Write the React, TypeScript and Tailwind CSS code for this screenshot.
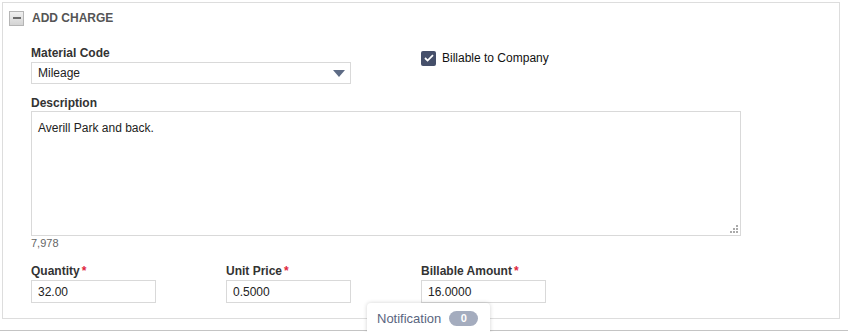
import React from "react";

const font = { fontFamily: '"Liberation Sans", Arial, sans-serif' };

const Label = ({ text, required }: { text: string; required?: boolean }) => (
  <div className="h-[16px] text-[12px] font-bold leading-[16px] text-[#333]">
    {text}
    {required && <span className="ml-[2px] text-[#e0253d]">*</span>}
  </div>
);

const Field = ({ label, value }: { label: string; value: string }) => (
  <div className="w-[125px]">
    <Label text={label} required />
    <div className="mt-[1px] flex h-[23px] items-center border border-[#d9d9d9] px-[6px] text-[12px] text-[#222]">
      {value}
    </div>
  </div>
);

export default function App() {
  return (
    <div className="relative h-[332px] w-[848px] overflow-hidden bg-white" style={font}>
      <div className="ml-[2px] mt-[2px] h-[317px] w-[838px] border border-[#dddddd]">
        <div className="flex items-center gap-[8px] pl-[6px] pt-[6px]">
          <div className="flex h-[15px] w-[15px] items-center justify-center border border-[#b5b5b5] bg-gradient-to-b from-[#f0f0f0] to-[#d4d4d4]">
            <span className="h-[2px] w-[8px] bg-[#6b6b6b]" />
          </div>
          <span className="text-[12px] font-bold text-[#555]">ADD CHARGE</span>
        </div>

        <div className="pl-[28px]">
          <div className="mt-[18px] flex items-start">
            <div className="w-[320px]">
              <Label text="Material Code" />
              <div className="mt-[1px] flex h-[22px] items-center justify-between border border-[#d9d9d9] pl-[6px] pr-[5px] text-[12px] text-[#222]">
                <span>Mileage</span>
                <svg width="12" height="7" viewBox="0 0 12 7">
                  <path d="M0 0h12L6 7z" fill="#5d6b85" />
                </svg>
              </div>
            </div>
            <div className="ml-[70px] mt-[4px] flex items-center gap-[6px]">
              <div className="flex h-[15px] w-[15px] items-center justify-center rounded-[2px] bg-[#454f6a]">
                <svg width="10" height="8" viewBox="0 0 10 8">
                  <path d="M1 4l2.6 2.6L9 1.2" stroke="#fff" strokeWidth="1.8" fill="none" />
                </svg>
              </div>
              <span className="text-[12px] text-[#111]">Billable to Company</span>
            </div>
          </div>

          <div className="mt-[11px]">
            <Label text="Description" />
            <div className="relative h-[125px] w-[710px] border border-[#d9d9d9] px-[6px] pt-[7px] text-[12px] text-[#222]">
              Averill Park and back.
              <svg className="absolute bottom-[2px] right-[2px]" width="8" height="8" viewBox="0 0 8 8">
                <rect x="6" y="0" width="2" height="2" fill="#aaa" />
                <rect x="3" y="3" width="2" height="2" fill="#aaa" />
                <rect x="6" y="3" width="2" height="2" fill="#aaa" />
                <rect x="0" y="6" width="2" height="2" fill="#aaa" />
                <rect x="3" y="6" width="2" height="2" fill="#aaa" />
                <rect x="6" y="6" width="2" height="2" fill="#aaa" />
              </svg>
            </div>
            <div className="h-[14px] text-[11px] leading-[14px] text-[#666]">7,978</div>
          </div>

          <div className="mt-[13px] flex gap-[70px]">
            <Field label="Quantity" value="32.00" />
            <Field label="Unit Price" value="0.5000" />
            <Field label="Billable Amount" value="16.0000" />
          </div>
        </div>
      </div>

      <div className="absolute bottom-0 left-0 h-[2px] w-full border-t border-[#c4c4c4]" />

      <div className="absolute left-[367px] top-[303px] flex h-[30px] w-[123px] items-start gap-[8px] rounded-t-[4px] bg-white pl-[10px] pt-[8px] shadow-[0_0_4px_rgba(0,0,0,0.18)]">
        <span className="text-[13px] leading-[16px] text-[#5a6580]">Notification</span>
        <span className="flex h-[15px] w-[29px] items-center justify-center rounded-full bg-[#a4acbe] text-[11px] font-bold text-white">
          0
        </span>
      </div>
    </div>
  );
}
